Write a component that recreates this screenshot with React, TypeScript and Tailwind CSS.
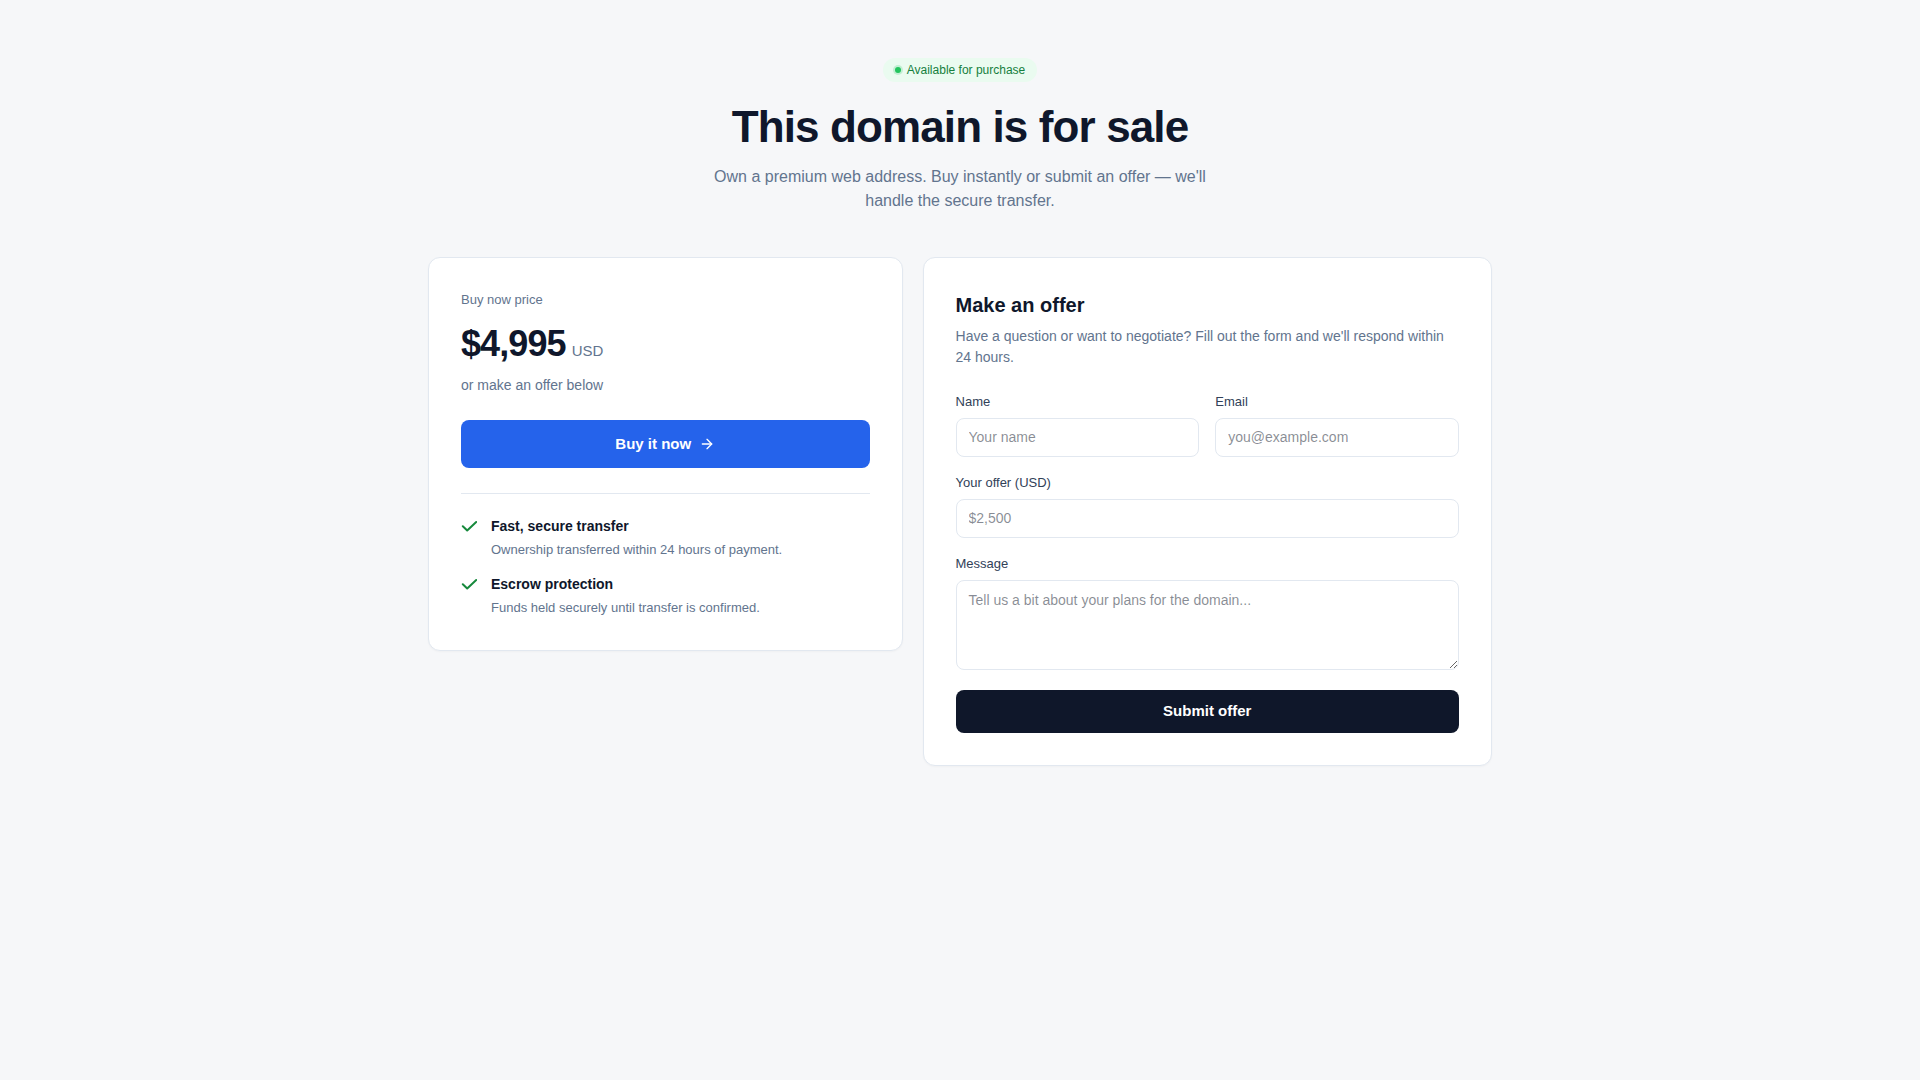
import { FC } from 'react';
import { ArrowRight } from 'lucide-react';

const features = [
  { title: 'Fast, secure transfer', text: 'Ownership transferred within 24 hours of payment.' },
  { title: 'Escrow protection', text: 'Funds held securely until transfer is confirmed.' },
];

const CheckMark: FC = () => (
  <svg className="w-4 h-4 mt-0.5 shrink-0 text-[#16893c]" viewBox="0 0 16 16" fill="none">
    <path d="M1.8 8.3 6.2 12.5 15.2 4" stroke="currentColor" strokeWidth="2" strokeLinecap="round" strokeLinejoin="round" />
  </svg>
);

const inputCls =
  'block w-full h-[39px] px-3 rounded-lg border border-slate-200 bg-white text-sm text-slate-900 outline-none focus:border-blue-500';

const BuyCard: FC = () => (
  <div className="bg-white border border-slate-200 rounded-xl px-8 pt-[33px] pb-[33px] shadow-[0_1px_2px_rgba(15,23,42,0.03)]">
    <p className="text-[13px] leading-[18px] text-slate-500">Buy now price</p>
    <div className="mt-[15px] flex items-baseline">
      <span className="text-4xl leading-10 font-bold tracking-tight text-slate-900">$4,995</span>
      <span className="ml-1.5 text-[15px] text-slate-500">USD</span>
    </div>
    <p className="mt-[11px] text-sm leading-5 text-slate-500">or make an offer below</p>
    <button className="mt-[25px] w-full h-12 flex items-center justify-center gap-2 rounded-lg bg-[#2563eb] text-white text-[15px] font-bold">
      Buy it now
      <ArrowRight size={16} strokeWidth={2} />
    </button>
    <div className="mt-[25px] border-t border-slate-200" />
    <ul className="pt-[22px] space-y-[15px]">
      {features.map((f) => (
        <li key={f.title} className="flex items-start gap-3.5">
          <CheckMark />
          <div>
            <p className="text-sm leading-5 font-bold text-slate-900">{f.title}</p>
            <p className="mt-[5px] text-[13px] leading-[18px] text-slate-500">{f.text}</p>
          </div>
        </li>
      ))}
    </ul>
  </div>
);

const OfferCard: FC = () => (
  <div className="bg-white border border-slate-200 rounded-xl p-8 shadow-[0_1px_2px_rgba(15,23,42,0.03)]">
    <h2 className="mt-px text-xl leading-7 font-bold text-slate-900">Make an offer</h2>
    <p className="mt-[7px] text-sm leading-normal text-slate-500">
      Have a question or want to negotiate? Fill out the form and we'll respond within 24 hours.
    </p>
    <form className="mt-6 flex flex-col gap-4" onSubmit={(e) => e.preventDefault()}>
      <div className="grid grid-cols-2 gap-4">
        <label className="block">
          <span className="block mb-1.5 text-[13px] leading-5 text-slate-700">Name</span>
          <input className={inputCls} placeholder="Your name" />
        </label>
        <label className="block">
          <span className="block mb-1.5 text-[13px] leading-5 text-slate-700">Email</span>
          <input className={inputCls} placeholder="you@example.com" />
        </label>
      </div>
      <label className="block">
        <span className="block mb-1.5 text-[13px] leading-5 text-slate-700">Your offer (USD)</span>
        <input className={inputCls} placeholder="$2,500" />
      </label>
      <label className="block">
        <span className="block mb-1.5 text-[13px] leading-5 text-slate-700">Message</span>
        <textarea
          className="block w-full h-[90px] px-3 pt-[9px] pb-2 rounded-lg border border-slate-200 bg-white text-sm leading-5 text-slate-900 outline-none"
          placeholder="Tell us a bit about your plans for the domain..."
        />
      </label>
      <button className="mt-1 w-full h-[43px] rounded-lg bg-[#0f172a] text-white text-[15px] font-bold">
        Submit offer
      </button>
    </form>
  </div>
);

const App: FC = () => {
  return (
    <div className="min-h-screen bg-[#f6f7f9] font-['Liberation_Sans',Arial,sans-serif] flex flex-col items-center pt-[58px] pb-16">
      <span className="inline-flex items-center gap-1.5 px-3 py-1 rounded-full bg-[#eafbf0] text-xs leading-4 text-[#15803d]">
        <span className="w-1.5 h-1.5 rounded-full bg-[#22c55e] ring-2 ring-[#22c55e]/20" />
        Available for purchase
      </span>
      <h1 className="mt-[21px] text-[44px] leading-[1.1] font-bold tracking-[-0.02em] text-slate-900">
        This domain is for sale
      </h1>
      <p className="mt-3.5 max-w-lg text-center text-base leading-[1.45] text-slate-500">
        Own a premium web address. Buy instantly or submit an offer — we'll handle the secure transfer.
      </p>
      <div className="mt-[45px] w-full max-w-[1064px] grid grid-cols-[1fr_1.2fr] gap-5 items-start">
        <BuyCard />
        <OfferCard />
      </div>
    </div>
  );
};

export default App;
